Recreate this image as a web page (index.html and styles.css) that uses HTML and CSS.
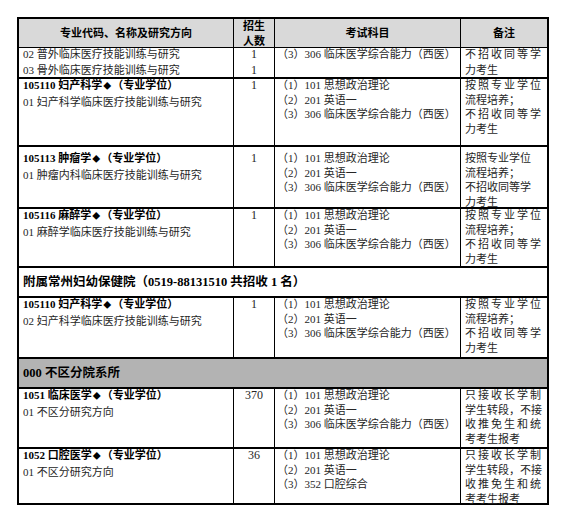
FILE: index.html
```html
<!DOCTYPE html>
<html lang="zh-CN">
<head>
<meta charset="utf-8">
<title>招生专业目录</title>
<link rel="stylesheet" href="styles.css">
</head>
<body>
<div class="catalog">
  <div class="cell head">专业代码、名称及研究方向</div>
  <div class="cell head"><span>招生</span><span>人数</span></div>
  <div class="cell head">考试科目</div>
  <div class="cell head end">备注</div>

  <div class="cell r1"><div class="lines"><div>02 普外临床医疗技能训练与研究</div><div>03 骨外临床医疗技能训练与研究</div></div></div>
  <div class="cell r1 num"><div class="lines"><div>1</div><div>1</div></div></div>
  <div class="cell r1 exam"><div class="lines"><div>（3）306 临床医学综合能力（西医）</div></div></div>
  <div class="cell r1 note end"><div class="lines"><div class="j">不招收同等学</div><div>力考生</div></div></div>

  <div class="cell"><div class="lines"><div class="t">105110 妇产科学<span class="dia">◆</span>（专业学位）</div><div>01 妇产科学临床医疗技能训练与研究</div></div></div>
  <div class="cell num"><div class="lines"><div>1</div></div></div>
  <div class="cell exam"><div class="lines"><div>（1）101 思想政治理论</div><div>（2）201 英语一</div><div>（3）306 临床医学综合能力（西医）</div></div></div>
  <div class="cell note end"><div class="lines"><div class="j">按照专业学位</div><div>流程培养；</div><div class="j">不招收同等学</div><div>力考生</div></div></div>

  <div class="cell pad"><div class="lines"><div class="t">105113 肿瘤学<span class="dia">◆</span>（专业学位）</div><div>01 肿瘤内科临床医疗技能训练与研究</div></div></div>
  <div class="cell num pad"><div class="lines"><div>1</div></div></div>
  <div class="cell exam pad"><div class="lines"><div>（1）101 思想政治理论</div><div>（2）201 英语一</div><div>（3）306 临床医学综合能力（西医）</div></div></div>
  <div class="cell note end pad"><div class="lines"><div>按照专业学位</div><div>流程培养；</div><div>不招收同等学</div><div>力考生</div></div></div>

  <div class="cell"><div class="lines"><div class="t">105116 麻醉学<span class="dia">◆</span>（专业学位）</div><div>01 麻醉学临床医疗技能训练与研究</div></div></div>
  <div class="cell num"><div class="lines"><div>1</div></div></div>
  <div class="cell exam"><div class="lines"><div>（1）101 思想政治理论</div><div>（2）201 英语一</div><div>（3）306 临床医学综合能力（西医）</div></div></div>
  <div class="cell note end"><div class="lines"><div class="j">按照专业学位</div><div>流程培养；</div><div class="j">不招收同等学</div><div>力考生</div></div></div>

  <div class="cell band">附属常州妇幼保健院（0519-88131510 共招收 1 名）</div>

  <div class="cell"><div class="lines"><div class="t">105110 妇产科学<span class="dia">◆</span>（专业学位）</div><div>02 妇产科学临床医疗技能训练与研究</div></div></div>
  <div class="cell num"><div class="lines"><div>1</div></div></div>
  <div class="cell exam"><div class="lines"><div>（1）101 思想政治理论</div><div>（2）201 英语一</div><div>（3）306 临床医学综合能力（西医）</div></div></div>
  <div class="cell note end"><div class="lines"><div class="j">按照专业学位</div><div>流程培养；</div><div class="j">不招收同等学</div><div>力考生</div></div></div>

  <div class="cell band gray">000 不区分院系所</div>

  <div class="cell"><div class="lines"><div class="t">1051 临床医学<span class="dia">◆</span>（专业学位）</div><div>01 不区分研究方向</div></div></div>
  <div class="cell num"><div class="lines"><div>370</div></div></div>
  <div class="cell exam"><div class="lines"><div>（1）101 思想政治理论</div><div>（2）201 英语一</div><div>（3）306 临床医学综合能力（西医）</div></div></div>
  <div class="cell note end"><div class="lines"><div class="j">只接收长学制</div><div>学生转段，不接</div><div class="j">收推免生和统</div><div>考考生报考</div></div></div>

  <div class="cell"><div class="lines"><div class="t">1052 口腔医学<span class="dia">◆</span>（专业学位）</div><div>01 不区分研究方向</div></div></div>
  <div class="cell num"><div class="lines"><div>36</div></div></div>
  <div class="cell exam"><div class="lines"><div>（1）101 思想政治理论</div><div>（2）201 英语一</div><div>（3）352 口腔综合</div></div></div>
  <div class="cell note end"><div class="lines"><div class="j">只接收长学制</div><div>学生转段，不接</div><div class="j">收推免生和统</div><div>考考生报考</div></div></div>
</div>
</body>
</html>
```

FILE: styles.css
```css
* {
  box-sizing: border-box;
}

html,
body {
  margin: 0;
  padding: 0;
  background: #ffffff;
}

body {
  font-family: "Liberation Serif", "Noto Sans CJK SC", sans-serif;
  font-size: 11px;
  font-weight: 400;
  color: #262626;
}

.catalog {
  display: grid;
  grid-template-columns: 215px 41px 186px 88px;
  grid-template-rows: 29px 31px 68px 62px 59px 30px 61px 30px 60px 56px;
  width: max-content;
  margin: 17px 0 0 17px;
  border-top: 2px solid #000;
  border-left: 2px solid #000;
}

.cell {
  border-right: 1px solid #000;
  border-bottom: 2px solid #000;
  line-height: 14.5px;
  padding: 0 4px;
}

.cell.end {
  border-right-width: 2px;
}

.head {
  background: #d9d9d9;
  border-bottom-width: 1px;
  display: flex;
  flex-direction: column;
  align-items: center;
  justify-content: center;
  font-weight: 700;
  color: #000;
  padding-top: 1px;
}

.band {
  grid-column: 1 / -1;
  border-right-width: 2px;
  display: flex;
  align-items: center;
  font-weight: 700;
  font-size: 12.5px;
  color: #000;
  padding-left: 4px;
}

.band.gray {
  background: #b3b3b3;
}

.lines {
  margin-top: -1px;
}

.lines > div {
  white-space: nowrap;
}

.lines > div.j {
  white-space: normal;
  text-align: justify;
  text-align-last: justify;
}

.lines > .t {
  font-weight: 700;
  color: #000;
}

.dia {
  font-size: 8px;
  margin: 0 1px;
}

.r1 .lines {
  line-height: 15.7px;
  margin-top: -1px;
}

.pad .lines {
  margin-top: 4px;
}

.num {
  text-align: center;
  font-size: 12px;
  padding: 0;
}

.exam {
  padding: 0 0 0 2px;
}

.note {
  padding: 0 6px 0 4px;
}
```
